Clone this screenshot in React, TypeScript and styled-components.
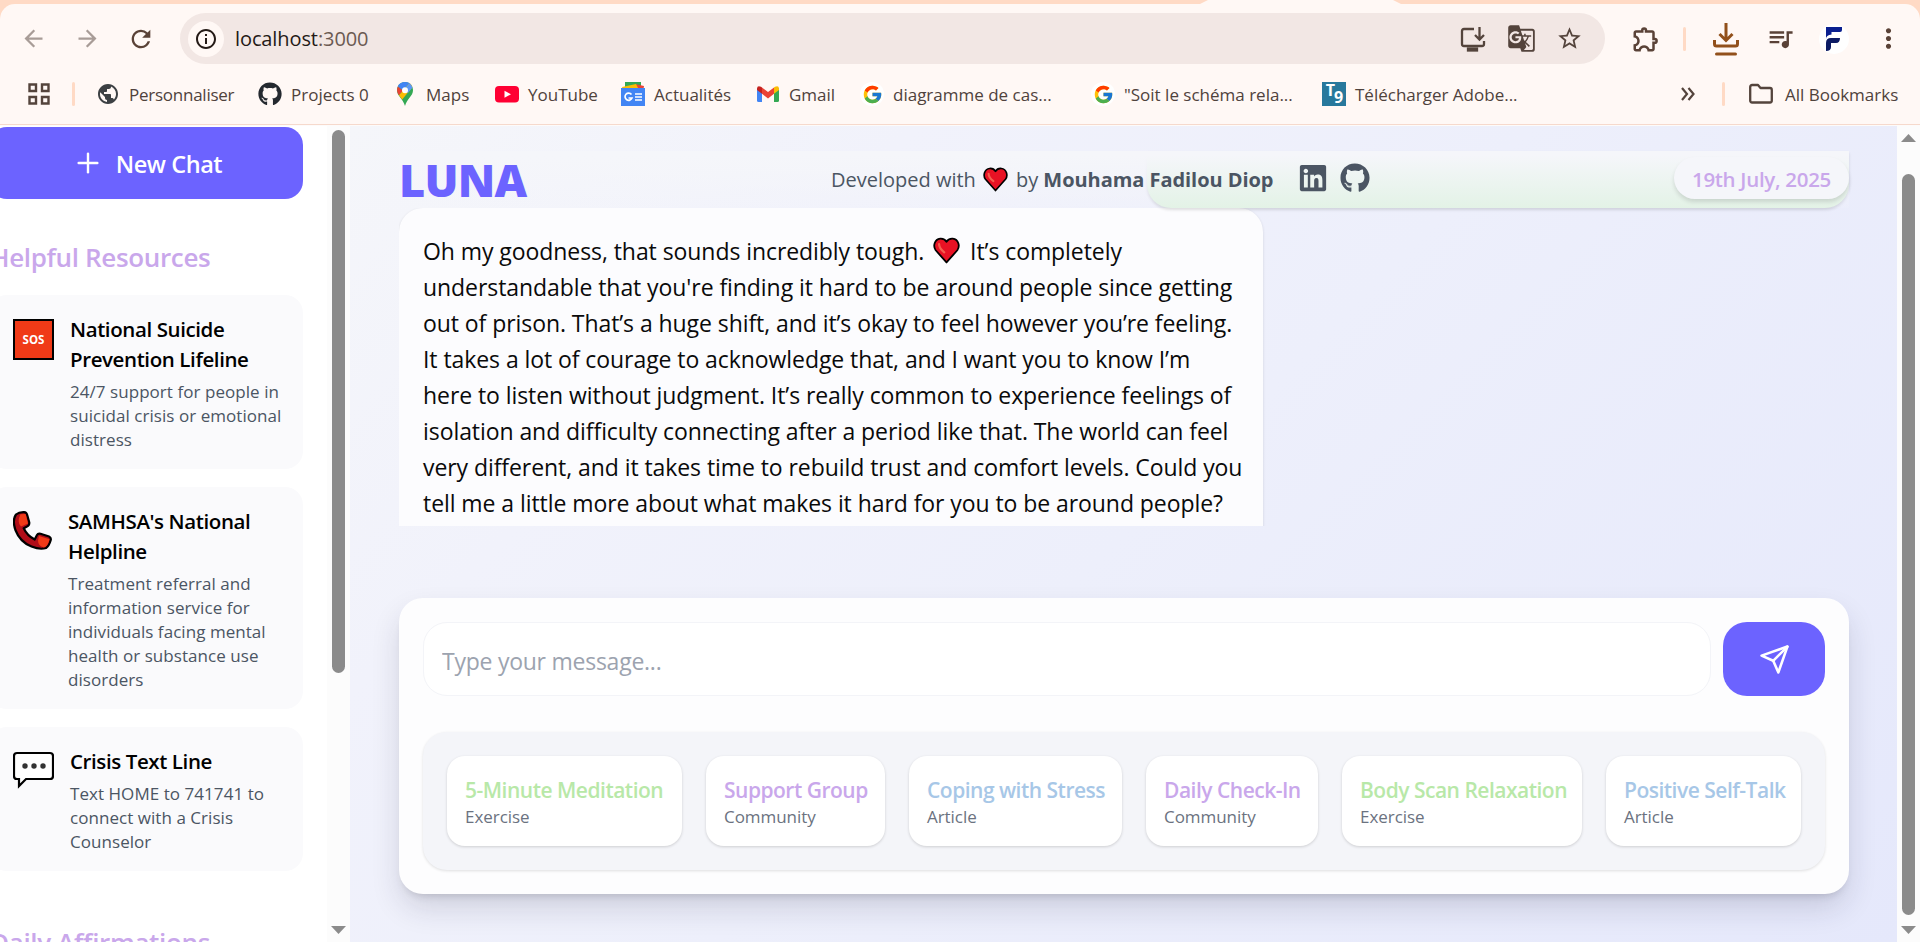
import React from 'react';
import styled, { createGlobalStyle, css } from 'styled-components';
import { FaGithub, FaLinkedin } from 'react-icons/fa';
import { FcGoogle } from 'react-icons/fc';
import { FiPlus, FiSend } from 'react-icons/fi';
import {
    MdArrowBack,
    MdArrowForward,
    MdGTranslate,
    MdMoreVert,
    MdOutlineExtension,
    MdOutlineInfo,
    MdPublic,
    MdQueueMusic,
    MdRefresh,
    MdStarBorder,
} from 'react-icons/md';

const PRIMARY = '#6c63ff';
const LAVENDER = '#c9a7eb';
const MINT = '#b8e8a8';
const SKY = '#a7c7e7';
const CREAM = '#fff8f5';
const PEACH = '#ffdac5';

const GlobalStyle = createGlobalStyle`
    * { box-sizing: border-box; }
    body {
        margin: 0;
        overflow: hidden;
        background: #fff;
        font-family: 'Segoe UI', 'Open Sans', 'Noto Sans', sans-serif;
    }
    p, h1, h2, h3 { margin: 0; }
    button, input { font-family: inherit; }
    svg { flex: none; display: block; }
`;

const Screen = styled.div`
    display: flex;
    flex-direction: column;
    width: 1920px;
    height: 946px;
    padding-bottom: 4px;
    overflow: hidden;
    background: #fff;
    white-space: nowrap;
`;

/* ---------- browser chrome ---------- */

const Browser = styled.header`
    flex: none;
    height: 126px;
    background: ${PEACH};
`;

const TabStrip = styled.div`
    height: 4px;
    padding-left: 1200px;
`;

const ActiveTab = styled.div`
    width: 201px;
    height: 4px;
    background: ${CREAM};
    clip-path: polygon(0 100%, 8px 0, 193px 0, 100% 100%);
`;

const BrowserBody = styled.div`
    height: 122px;
    background: ${CREAM};
    border-radius: 15px 15px 0 0;
    border-bottom: 1px solid #fdfbfa;
    box-shadow: inset 0 -1px 0 #f6d9cc;
`;

const Toolbar = styled.div`
    display: flex;
    align-items: center;
    height: 69px;
    padding: 0 5px 0 6px;
`;

const Slot = styled.span<{ $w?: number; $color?: string; $size?: number }>`
    display: flex;
    flex: none;
    align-items: center;
    justify-content: center;
    width: ${p => p.$w || 54}px;
    color: ${p => p.$color || '#5a4237'};
    font-size: ${p => p.$size || 27}px;
`;

const AddressBar = styled.div`
    display: flex;
    align-items: center;
    width: 1425px;
    height: 51px;
    margin: 0 14px 0 12px;
    padding: 0 12px 0 8px;
    border-radius: 26px;
    background: #f2e7e4;
`;

const SiteInfo = styled.span`
    display: grid;
    place-items: center;
    width: 36px;
    height: 36px;
    border-radius: 50%;
    background: ${CREAM};
    color: #241a16;
    font-size: 24px;
`;

const Address = styled.span`
    flex: 1;
    margin-left: 11px;
    padding-bottom: 1px;
    color: #6b5a52;
    font-size: 20px;
    letter-spacing: -0.1px;

    b {
        color: #241a16;
        font-weight: 400;
    }
`;

const Divider = styled.i<{ $m: string }>`
    flex: none;
    width: 3px;
    height: 24px;
    margin: ${p => p.$m};
    border-radius: 2px;
    background: ${PEACH};
`;

const Profile = styled.span`
    display: grid;
    place-items: center;
    width: 30px;
    height: 30px;
    border-radius: 50%;
    background: #fff;
`;

const BookmarkBar = styled.nav`
    display: flex;
    align-items: center;
    height: 42px;
    padding: 0 22px 0 27px;
    color: #4f423c;
`;

const Bookmark = styled.a<{ $w?: number; $ls?: number; $gap?: number }>`
    display: flex;
    flex: none;
    align-items: center;
    gap: ${p => p.$gap || 9}px;
    width: ${p => (p.$w ? p.$w + 'px' : 'auto')};
    font-size: 17px;
    letter-spacing: ${p => p.$ls || 0}px;

    > svg,
    > span {
        width: 24px;
    }
`;

const Spacer = styled.span`
    flex: 1;
`;

const GoogleBadge = styled.span`
    display: grid;
    place-items: center;
    height: 24px;
    border-radius: 50%;
    background: #fff;
`;

const TgBadge = styled.span`
    display: flex;
    justify-content: center;
    height: 24px;
    background: #27789c;
    color: #fff;
    font-size: 16px;
    font-weight: 700;
    line-height: 17px;
    letter-spacing: -1px;

    sub {
        align-self: flex-end;
        font-size: 16px;
        line-height: 17px;
    }
`;

/* ---------- page ---------- */

const Page = styled.div`
    display: flex;
    flex: 1;
    min-height: 0;
`;

const Sidebar = styled.aside`
    flex: none;
    width: 327px;
    padding: 1px 24px 0 0;
    overflow: hidden;
    background: #fff;
`;

const SidebarContent = styled.div`
    display: flex;
    flex-direction: column;
    width: 314px;
    margin-left: -11px;
`;

const NewChat = styled.button`
    display: flex;
    flex: none;
    align-items: center;
    justify-content: center;
    gap: 12px;
    height: 72px;
    padding: 2px 0 0 2px;
    border: 0;
    border-radius: 18px;
    background: ${PRIMARY};
    color: #fff;
    font-size: 23.5px;
    font-weight: 600;
    letter-spacing: -0.45px;

    svg {
        margin-top: -2px;
        stroke-width: 1.8;
    }
`;

const SectionTitle = styled.h2<{ $top: number }>`
    margin-top: ${p => p.$top}px;
    padding-left: 1px;
    color: ${LAVENDER};
    font-size: 26px;
    font-weight: 600;
    line-height: 40px;
    letter-spacing: -0.35px;
`;

const ResourceList = styled.div`
    display: flex;
    flex-direction: column;
    gap: 18px;
    margin-top: 18px;
`;

const ResourceCard = styled.article<{ $gap: number }>`
    display: flex;
    gap: ${p => p.$gap}px;
    padding: 19px 18px 17px 24px;
    border-radius: 18px;
    background: #fafafc;

    > svg,
    > span {
        margin-top: 5px;
    }
`;

const ResourceTitle = styled.h3`
    color: #000;
    font-size: 20.5px;
    font-weight: 600;
    line-height: 30px;
    letter-spacing: -0.4px;
`;

const ResourceText = styled.p`
    margin-top: 6px;
    color: #4b5563;
    font-size: 17px;
    line-height: 24px;
    letter-spacing: 0.05px;
`;

const SosBadge = styled.span`
    display: grid;
    place-items: center;
    width: 41px;
    height: 41px;
    border: 2px solid #000;
    background: #f03a17;
    color: #fff;
    font-size: 11.5px;
    font-weight: 700;
`;

const ScrollTrack = styled.div<{ $top: number }>`
    display: flex;
    flex: none;
    flex-direction: column;
    align-items: center;
    width: 23px;
    padding: ${p => p.$top}px 0 8px;
    background: #fcfcfc;
`;

const ScrollThumb = styled.div<{ $h: number; $mt?: number }>`
    width: 13px;
    height: ${p => p.$h}px;
    margin-top: ${p => p.$mt || 0}px;
    border-radius: 7px;
    background: #8b8b8b;
`;

const ScrollArrow = styled.i<{ $up?: boolean }>`
    width: 15px;
    height: 8px;
    background: #8b8b8b;
    clip-path: polygon(0 0, 100% 0, 50% 100%);
    ${p =>
        p.$up &&
        css`
            transform: rotate(180deg);
        `}
`;

const Main = styled.main`
    display: flex;
    flex: 1;
    flex-direction: column;
    min-width: 0;
    padding: 25px 48px 48px 49px;
    background: linear-gradient(135deg, #f5f6fa 0%, #f1f2fb 24%, #edeffb 50%, #e5e8fb 100%);
`;

const ChatHead = styled.div`
    position: relative;
    flex: none;
    height: 57px;
`;

/* tail of the user's previous message, scrolled under the header */
const UserBubble = styled.div`
    position: absolute;
    right: 0;
    bottom: 0;
    width: 702px;
    height: 57px;
    border-radius: 0 0 24px 24px;
    background: #e1f2e4;
    box-shadow: 0 2px 3px rgba(0, 0, 0, 0.12);
`;

const HeaderBar = styled.div`
    position: relative;
    display: flex;
    align-items: center;
    justify-content: space-between;
    height: 57px;
    background: linear-gradient(#f5f6fa 8%, rgba(245, 246, 250, 0.1));
`;

const Brand = styled.h1`
    width: 432px;
    color: ${PRIMARY};
    font-size: 45px;
    font-weight: 800;
    line-height: 54px;
    letter-spacing: -0.8px;
`;

const Credit = styled.div`
    display: flex;
    flex: 1;
    align-items: center;
    color: #4b5563;
    font-size: 20px;
    line-height: 48px;

    b {
        letter-spacing: -0.05px;
    }
`;

const CreditHeart = styled.span`
    margin: 0 8px 0 7px;
`;

const Social = styled.a`
    margin: -3px 0 0 12px;

    &:first-of-type {
        margin-left: 25px;
    }
`;

const DatePill = styled.time`
    width: 175px;
    height: 42px;
    margin-bottom: 3px;
    border-radius: 21px;
    background: #f5f6fa;
    box-shadow: 0 3px 4px rgba(0, 0, 0, 0.12);
    color: ${LAVENDER};
    font-size: 20.5px;
    font-weight: 600;
    line-height: 44px;
    text-align: center;
    letter-spacing: -0.3px;
`;

const Messages = styled.section`
    flex: none;
    height: 318px;
    overflow: hidden;
`;

const BotBubble = styled.div`
    width: 864px;
    height: 360px;
    padding: 25px 24px;
    border-radius: 24px;
    background: #fcfcfe;
    box-shadow: 0 1px 3px rgba(0, 0, 0, 0.12);
    color: #0a0a0a;
    font-size: 23px;
    line-height: 36px;
    letter-spacing: -0.07px;

    svg {
        display: inline-block;
        margin: 0 4px 0 3px;
        vertical-align: -4px;
    }
`;

const Composer = styled.section`
    display: flex;
    flex-direction: column;
    gap: 36px;
    height: 296px;
    margin-top: 72px;
    padding: 24px;
    border-radius: 24px;
    background: #fdfdfe;
    box-shadow: 0 15px 30px -2px rgba(30, 30, 60, 0.16), 0 6px 9px -5px rgba(0, 0, 0, 0.16);
`;

const InputRow = styled.div`
    display: flex;
    gap: 12px;
    height: 74px;
`;

const MessageInput = styled.input`
    flex: 1;
    padding: 3px 18px 0;
    border: 1px solid #f3f4f8;
    border-radius: 24px;
    outline: 0;
    background: #fff;
    font-size: 23px;
    letter-spacing: -0.25px;

    &::placeholder {
        color: #9ca3af;
        opacity: 1;
    }
`;

const SendButton = styled.button`
    display: grid;
    place-items: center;
    width: 102px;
    border: 0;
    border-radius: 24px;
    background: ${PRIMARY};
    color: #fff;
`;

const Suggestions = styled.div`
    display: flex;
    gap: 24px;
    height: 138px;
    padding: 24px;
    border-radius: 24px;
    background: #f4f5f9;
    box-shadow: 0 1px 3px rgba(0, 0, 0, 0.12);
`;

const Suggestion = styled.a<{ $w: number }>`
    width: ${p => p.$w}px;
    padding: 19px 18px 17px;
    border-radius: 18px;
    background: #fff;
    box-shadow: 0 1px 3px rgba(0, 0, 0, 0.16);
`;

const SuggestionTitle = styled.h3<{ $color: string }>`
    color: ${p => p.$color};
    font-size: 21px;
    font-weight: 600;
    line-height: 30px;
    letter-spacing: -0.5px;
`;

const SuggestionKind = styled.p`
    color: #6b7280;
    font-size: 17px;
    line-height: 24px;
    letter-spacing: -0.05px;
`;

/* ---------- drawings ---------- */

const Heart = ({ size }: { size: number }) => (
    <svg width={size} height={size} viewBox="0 0 24 24">
        <path
            d="M12 22.6 2.4 11.8C-.2 8.200 1.200 2 6.400 1.400 9 1.200 11 2.400 12 4.200 13 2.400 15 1.200 17.600 1.400 22.800 2 24.200 8.200 21.600 11.800Z"
            fill="#e81224"
            stroke="#000"
            strokeWidth="1.6"
            strokeLinejoin="round"
        />
        <path d="M5.400 6.400c0 3 2.600 5.600 4.600 7.200" fill="none" stroke="#f4604f" strokeWidth="2" strokeLinecap="round" />
    </svg>
);

const PhoneDrawing = () => (
    <svg width="39" height="40" viewBox="0 0 39 40">
        <path
            d="M3 3.500Q6 1 11 1.200 13.500 1.500 14.200 4L16.300 11.500Q16.500 14.500 14 15.500L10.700 17.200Q14 24.500 21.700 28.500L24 24Q25 22 27.500 22.700L36 25.500Q38.500 26.500 37.600 29.500 36 35 33 37 27 39 18.500 35.500 7 31 2.400 19-1 9 3 3.500Z"
            fill="#b00d19"
            stroke="#000"
            strokeWidth="2.200"
            strokeLinejoin="round"
        />
        <path d="M8 15.500Q3.500 11 7.500 3.200L12.600 3 15 12.500ZM25 29.500 26 25 36.500 28.300Q35 35 31 36.500 25 35 25 29.500Z" fill="#f03a17" />
    </svg>
);

const SpeechDrawing = () => (
    <svg width="41" height="38" viewBox="0 0 41 38">
        <path
            d="M4 2H37Q40 2 40 5V25Q40 28 37 28H13L6 35V28H4Q1 28 1 25V5Q1 2 4 2Z"
            fill="#fff"
            stroke="#000"
            strokeWidth="2.200"
        />
        <g fill="#333">
            <circle cx="12" cy="15" r="2.700" />
            <circle cx="21" cy="15" r="2.700" />
            <circle cx="30" cy="15" r="2.700" />
        </g>
    </svg>
);

const AppsDrawing = () => (
    <svg width="24" height="24" viewBox="0 0 24 24" fill="none" stroke="#54443c" strokeWidth="2.400">
        <path d="M2.500 2.500h6.500V9H2.500ZM15 2.500h6.500V9H15ZM2.500 15h6.500v6.500H2.500ZM15 15h6.500v6.500H15Z" />
    </svg>
);

const InstallDrawing = () => (
    <svg width="26" height="26" viewBox="0 0 26 26" fill="none" stroke="#54443c" strokeWidth="2.300">
        <path d="M14 3H4Q2 3 2 5v13q0 2 2 2h18q2 0 2-2v-3M19.500 1v12M15 9l4.500 4.500L24 9" />
        <path d="M8 22.500h9v2H8Z" fill="#54443c" />
    </svg>
);

const DownloadDrawing = () => (
    <svg width="26" height="34" viewBox="0 0 26 34" fill="none" stroke="#92501b" strokeWidth="3">
        <path d="M13 1v17M6.500 12l6.500 6.500L19.500 12M1.500 18v4q0 2 2 2h19q2 0 2-2v-4" />
        <path d="M3.500 32h19" strokeLinecap="round" />
    </svg>
);

const FolderDrawing = () => (
    <svg height="24" viewBox="0 0 24 24" fill="none" stroke="#54443c" strokeWidth="2.300" strokeLinejoin="round">
        <path d="M1.200 5q0-2 2-2H9l2.500 3H21q1.800 0 1.800 2v10.500q0 2-1.800 2H3.200q-2 0-2-2Z" />
    </svg>
);

const ProfileDrawing = () => (
    <svg width="18" height="26" viewBox="0 0 18 26" fill="#0a1f8f">
        <path d="M1 1h16v3q0 2-2 2H6.500v2.500Q1 9 1 13Z" />
        <path d="M1 17q0-5 5-5h9q0 5-4 5H6v4q0 4-5 4Z" fill="#0b1a63" />
    </svg>
);

const MapsDrawing = () => (
    <svg height="24" viewBox="0 0 24 24">
        <path d="M12 0C7 0 4 4 4 8.200c0 6 6 8 8 15.800 2-7.800 8-9.800 8-15.800C20 4 17 0 12 0Z" fill="#34a853" />
        <path d="M12 0C8.500 0 6 1.700 4.800 4.400L9.600 8.500 16.500.9Q14.500 0 12 0Z" fill="#4285f4" />
        <path d="M4.800 4.400C3.300 8 4.300 11 6 13.300L10 8.800Z" fill="#ea4335" />
        <path d="M6 13.300Q7.500 15.500 9.200 17.400L19.400 5Q18.500 2.200 16.500.9Z" fill="#fbbc04" />
        <path d="M16.500.9 11 7.500l4 3.500 4.500-5.500Q18.500 2.500 16.500.9Z" fill="#5b98f5" />
        <circle cx="12" cy="8.200" r="3" fill="#fff" />
    </svg>
);

const YoutubeDrawing = () => (
    <svg height="24" viewBox="0 0 24 24">
        <rect y="4" width="24" height="16.500" rx="4" fill="#ff0033" />
        <path d="m9.500 8.700 6.500 3.600-6.500 3.500Z" fill="#fff" />
    </svg>
);

const NewsDrawing = () => (
    <svg height="24" viewBox="0 0 24 24">
        <path d="M4 0h16v8H4Z" fill="#34a853" />
        <path d="m14 2 9 2-1 6H12Z" fill="#ea4335" />
        <path d="m1 5 14-3 3 6H2Z" fill="#fbbc04" />
        <path d="M0 6h24v18H0Z" fill="#4285f4" />
        <path d="M10.500 12.500A3.600 3.600 0 1 0 11 16H7.500M14 12h7M14 15h7M14 18h7" fill="none" stroke="#fff" strokeWidth="1.700" />
    </svg>
);

const GmailDrawing = () => (
    <svg height="24" viewBox="0 0 24 24">
        <path d="M1 6v12.500q0 1.500 1.500 1.500H6V9Z" fill="#4285f4" />
        <path d="M23 6v12.500q0 1.500-1.500 1.500H18V9Z" fill="#34a853" />
        <path d="M6 5.500 12 10l6-4.500v6.300L12 16.500 6 11.800Z" fill="#ea4335" />
        <path d="M1 6.500Q1.300 3 5 4.700L6 5.500v6.300L1 8Z" fill="#c5221f" />
        <path d="M23 6.500Q22.700 3 19 4.700L18 5.500v6.300L23 8Z" fill="#fbbc04" />
    </svg>
);

const ChevronsDrawing = () => (
    <svg width="14" height="14" viewBox="0 0 14 14" fill="none" stroke="#54443c" strokeWidth="2.200">
        <path d="m1 1 5 6-5 6M7.500 1l5 6-5 6" />
    </svg>
);

/* ---------- data ---------- */

const resources = [
    {
        icon: <SosBadge>SOS</SosBadge>,
        gap: 16,
        title: ['National Suicide', 'Prevention Lifeline'],
        text: ['24/7 support for people in', 'suicidal crisis or emotional', 'distress'],
    },
    {
        icon: <PhoneDrawing />,
        gap: 16,
        title: ["SAMHSA's National", 'Helpline'],
        text: [
            'Treatment referral and',
            'information service for',
            'individuals facing mental',
            'health or substance use',
            'disorders',
        ],
    },
    {
        icon: <SpeechDrawing />,
        gap: 16,
        title: ['Crisis Text Line'],
        text: ['Text HOME to 741741 to', 'connect with a Crisis', 'Counselor'],
    },
];

const suggestions = [
    { title: '5-Minute Meditation', kind: 'Exercise', color: MINT, width: 235 },
    { title: 'Support Group', kind: 'Community', color: LAVENDER, width: 179 },
    { title: 'Coping with Stress', kind: 'Article', color: SKY, width: 213 },
    { title: 'Daily Check-In', kind: 'Community', color: LAVENDER, width: 172 },
    { title: 'Body Scan Relaxation', kind: 'Exercise', color: MINT, width: 240 },
    { title: 'Positive Self-Talk', kind: 'Article', color: SKY, width: 195 },
];

const Lines = ({ items }: { items: string[] }) => (
    <>
        {items.map((line, i) => (
            <React.Fragment key={line}>
                {i > 0 && <br />}
                {line}
            </React.Fragment>
        ))}
    </>
);

const BrowserChrome = () => (
    <Browser>
        <TabStrip>
            <ActiveTab />
        </TabStrip>
        <BrowserBody>
            <Toolbar>
                <Slot $color="#a89c97">
                    <MdArrowBack />
                </Slot>
                <Slot $color="#a89c97">
                    <MdArrowForward />
                </Slot>
                <Slot $size={28}>
                    <MdRefresh />
                </Slot>
                <AddressBar>
                    <SiteInfo>
                        <MdOutlineInfo />
                    </SiteInfo>
                    <Address>
                        <b>localhost</b>:3000
                    </Address>
                    <Slot $w={48}>
                        <InstallDrawing />
                    </Slot>
                    <Slot $w={48} $size={29} $color="#54443c">
                        <MdGTranslate />
                    </Slot>
                    <Slot $w={48} $color="#54443c">
                        <MdStarBorder />
                    </Slot>
                </AddressBar>
                <Slot $size={30}>
                    <MdOutlineExtension />
                </Slot>
                <Divider $m="0 13px 0 10px" />
                <Slot>
                    <DownloadDrawing />
                </Slot>
                <Slot $size={29}>
                    <MdQueueMusic />
                </Slot>
                <Slot>
                    <Profile>
                        <ProfileDrawing />
                    </Profile>
                </Slot>
                <Slot $size={31}>
                    <MdMoreVert />
                </Slot>
            </Toolbar>
            <BookmarkBar>
                <AppsDrawing />
                <Divider $m="0 21px" />
                <Bookmark $w={162} $ls={-0.25}>
                    <MdPublic size={24} color="#3c4043" />
                    Personnaliser
                </Bookmark>
                <Bookmark $w={135}>
                    <FaGithub size={24} color="#24292f" />
                    Projects 0
                </Bookmark>
                <Bookmark $w={102}>
                    <MapsDrawing />
                    Maps
                </Bookmark>
                <Bookmark $w={126}>
                    <YoutubeDrawing />
                    YouTube
                </Bookmark>
                <Bookmark $w={135}>
                    <NewsDrawing />
                    Actualités
                </Bookmark>
                <Bookmark $w={104}>
                    <GmailDrawing />
                    Gmail
                </Bookmark>
                <Bookmark $w={231}>
                    <GoogleBadge>
                        <FcGoogle size={21} />
                    </GoogleBadge>
                    diagramme de cas...
                </Bookmark>
                <Bookmark $w={231}>
                    <GoogleBadge>
                        <FcGoogle size={21} />
                    </GoogleBadge>
                    "Soit le schéma rela...
                </Bookmark>
                <Bookmark>
                    <TgBadge>
                        T<sub>9</sub>
                    </TgBadge>
                    Télécharger Adobe...
                </Bookmark>
                <Spacer />
                <ChevronsDrawing />
                <Divider $m="0 24px 0 27px" />
                <Bookmark $w={149} $gap={12}>
                    <FolderDrawing />
                    All Bookmarks
                </Bookmark>
            </BookmarkBar>
        </BrowserBody>
    </Browser>
);

const App = () => (
    <Screen>
        <GlobalStyle />
        <BrowserChrome />
        <Page>
            <Sidebar>
                <SidebarContent>
                    <NewChat>
                        <FiPlus size={32} />
                        New Chat
                    </NewChat>
                    <SectionTitle $top={38}>Helpful Resources</SectionTitle>
                    <ResourceList>
                        {resources.map(r => (
                            <ResourceCard key={r.title[0]} $gap={r.gap}>
                                {r.icon}
                                <div>
                                    <ResourceTitle>
                                        <Lines items={r.title} />
                                    </ResourceTitle>
                                    <ResourceText>
                                        <Lines items={r.text} />
                                    </ResourceText>
                                </div>
                            </ResourceCard>
                        ))}
                    </ResourceList>
                    <SectionTitle $top={51}>Daily Affirmations</SectionTitle>
                </SidebarContent>
            </Sidebar>
            <ScrollTrack $top={4}>
                <ScrollThumb $h={543} />
                <Spacer />
                <ScrollArrow />
            </ScrollTrack>
            <Main>
                <ChatHead>
                    <UserBubble />
                    <HeaderBar>
                        <Brand>LUNA</Brand>
                        <Credit>
                            <span>Developed with</span>
                            <CreditHeart>
                                <Heart size={25} />
                            </CreditHeart>
                            <span>
                                by <b>Mouhama Fadilou Diop</b>
                            </span>
                            <Social>
                                <FaLinkedin size={30} />
                            </Social>
                            <Social>
                                <FaGithub size={30} />
                            </Social>
                        </Credit>
                        <DatePill>19th July, 2025</DatePill>
                    </HeaderBar>
                </ChatHead>
                <Messages>
                    <BotBubble>
                        Oh my goodness, that sounds incredibly tough. <Heart size={27} /> It’s completely
                        <br />
                        understandable that you're finding it hard to be around people since getting
                        <br />
                        out of prison. That’s a huge shift, and it’s okay to feel however you’re feeling.
                        <br />
                        It takes a lot of courage to acknowledge that, and I want you to know I’m
                        <br />
                        here to listen without judgment. It’s really common to experience feelings of
                        <br />
                        isolation and difficulty connecting after a period like that. The world can feel
                        <br />
                        very different, and it takes time to rebuild trust and comfort levels. Could you
                        <br />
                        tell me a little more about what makes it hard for you to be around people?
                    </BotBubble>
                </Messages>
                <Composer>
                    <InputRow>
                        <MessageInput placeholder="Type your message..." />
                        <SendButton>
                            <FiSend size={31} />
                        </SendButton>
                    </InputRow>
                    <Suggestions>
                        {suggestions.map(s => (
                            <Suggestion key={s.title} $w={s.width}>
                                <SuggestionTitle $color={s.color}>{s.title}</SuggestionTitle>
                                <SuggestionKind>{s.kind}</SuggestionKind>
                            </Suggestion>
                        ))}
                    </Suggestions>
                </Composer>
            </Main>
            <ScrollTrack $top={8}>
                <ScrollArrow $up />
                <ScrollThumb $h={741} $mt={32} />
                <Spacer />
                <ScrollArrow />
            </ScrollTrack>
        </Page>
    </Screen>
);

export default App;
